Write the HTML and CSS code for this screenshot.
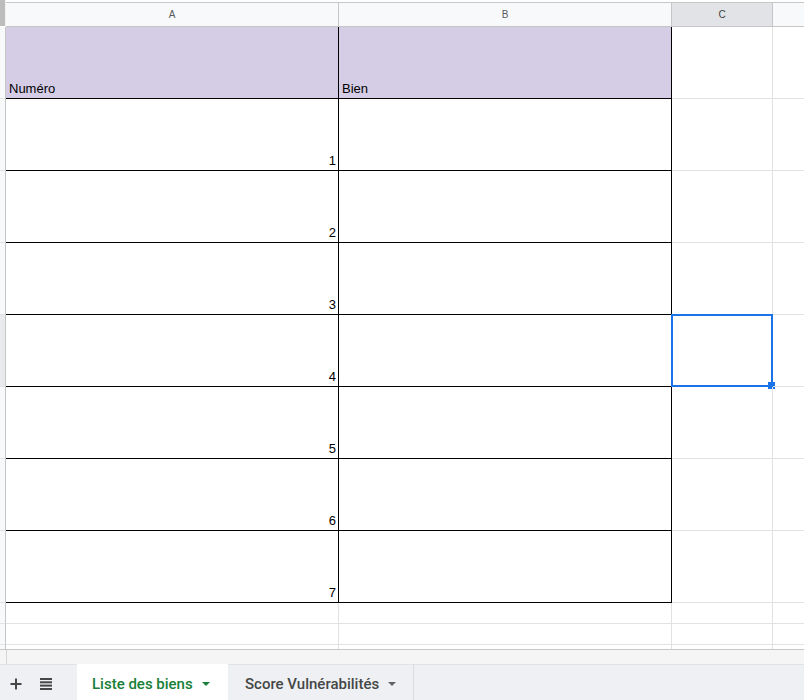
FILE: index.html
```html
<!DOCTYPE html>
<html lang="fr">
<head>
<meta charset="utf-8">
<title>Liste des biens</title>
<link rel="stylesheet" href="styles.css">
</head>
<body>
<div class="app">
  <div class="sheet">
    <div class="corner"></div>
    <div class="colhead">A</div>
    <div class="colhead">B</div>
    <div class="colhead colhead-sel">C</div>
    <div class="colhead colhead-last"></div>

    <div class="rowhead r-big"></div>
    <div class="cell tbl head-cell">Numéro</div>
    <div class="cell tbl head-cell">Bien</div>
    <div class="cell"></div>
    <div class="cell last"></div>

    <div class="rowhead r-big"></div>
    <div class="cell tbl num">1</div>
    <div class="cell tbl"></div>
    <div class="cell"></div>
    <div class="cell last"></div>

    <div class="rowhead r-big"></div>
    <div class="cell tbl num">2</div>
    <div class="cell tbl"></div>
    <div class="cell"></div>
    <div class="cell last"></div>

    <div class="rowhead r-big"></div>
    <div class="cell tbl num">3</div>
    <div class="cell tbl"></div>
    <div class="cell"></div>
    <div class="cell last"></div>

    <div class="rowhead r-big rowhead-sel"></div>
    <div class="cell tbl num">4</div>
    <div class="cell tbl"></div>
    <div class="cell selected"><span class="sel-box"></span><span class="sel-handle"></span></div>
    <div class="cell last"></div>

    <div class="rowhead r-big"></div>
    <div class="cell tbl num">5</div>
    <div class="cell tbl"></div>
    <div class="cell"></div>
    <div class="cell last"></div>

    <div class="rowhead r-big"></div>
    <div class="cell tbl num">6</div>
    <div class="cell tbl"></div>
    <div class="cell"></div>
    <div class="cell last"></div>

    <div class="rowhead r-big"></div>
    <div class="cell tbl num">7</div>
    <div class="cell tbl"></div>
    <div class="cell"></div>
    <div class="cell last"></div>

    <div class="rowhead"></div>
    <div class="cell"></div>
    <div class="cell"></div>
    <div class="cell"></div>
    <div class="cell last"></div>

    <div class="rowhead"></div>
    <div class="cell"></div>
    <div class="cell"></div>
    <div class="cell"></div>
    <div class="cell last"></div>

    <div class="rowhead"></div>
    <div class="cell"></div>
    <div class="cell"></div>
    <div class="cell"></div>
    <div class="cell last"></div>
  </div>
  <div class="hscroll"><div class="hscroll-edge"></div></div>
  <div class="tabbar">
    <div class="tool tool-add" title="Ajouter une feuille">
      <svg width="12" height="12" viewBox="0 0 12 12"><path d="M6 0.5v11M0.5 6h11" stroke="#444746" stroke-width="2" fill="none"/></svg>
    </div>
    <div class="tool tool-list" title="Toutes les feuilles">
      <svg width="12" height="12" viewBox="0 0 12 12"><rect x="0" y="0" width="12" height="2" fill="#444746"/><rect x="0" y="3.3" width="12" height="2" fill="#444746"/><rect x="0" y="6.6" width="12" height="2" fill="#444746"/><rect x="0" y="10" width="12" height="2" fill="#444746"/></svg>
    </div>
    <div class="tab tab-active">
      <span class="tab-label">Liste des biens</span>
      <span class="caret caret-green"></span>
    </div>
    <div class="tab">
      <span class="tab-label">Score Vulnérabilités</span>
      <span class="caret"></span>
    </div>
  </div>
</div>
</body>
</html>
```

FILE: styles.css
```css
* { box-sizing: border-box; }

html, body {
  margin: 0;
  padding: 0;
  background: #ffffff;
}

.app {
  width: 804px;
  height: 700px;
  display: flex;
  flex-direction: column;
  overflow: hidden;
  font-family: "Liberation Sans", Arial, sans-serif;
}

.sheet {
  height: 649px;
  overflow: hidden;
  display: grid;
  grid-template-columns: 6px 333px 333px 101px 1fr;
  grid-auto-rows: 21px;
  grid-template-rows: 27px repeat(8, 72px);
  flex: none;
}

.corner {
  height: 26px;
  background: #bdbdbd;
  border-right: 1px solid #f1f1f1;
}

.colhead {
  margin-top: 2px;
  height: 25px;
  background: #f8f9fa;
  border-top: 1px solid #c7c7c7;
  border-bottom: 1px solid #c4c7c5;
  border-right: 1px solid #c4c7c5;
  font-size: 10px;
  color: #575a5e;
  display: flex;
  align-items: center;
  justify-content: center;
  padding-bottom: 1px;
}

.colhead-sel {
  background: #e1e3e6;
  color: #3c4043;
}

.colhead-last {
  border-right: none;
}

.rowhead {
  background: #f8f9fa;
  border-right: 1px solid #c4c7c5;
  border-bottom: 1px solid #e2e2e2;
}

.rowhead-sel {
  background: #e8eaed;
}

.cell {
  position: relative;
  border-right: 1px solid #e2e2e2;
  border-bottom: 1px solid #e2e2e2;
  font-size: 13px;
  color: #000;
  line-height: 17px;
  display: flex;
  align-items: flex-end;
  padding: 0 3px 1px 3px;
}

.cell.last {
  border-right: none;
}

.cell.tbl {
  border-right-color: #000;
  border-bottom-color: #000;
}

.head-cell {
  background: #d5cde6;
}

.num {
  justify-content: flex-end;
  padding-right: 2px;
}

.sel-box {
  position: absolute;
  left: -1px;
  top: -1px;
  right: -1px;
  bottom: -1px;
  border: 2px solid #1a73e8;
}

.sel-handle {
  position: absolute;
  right: -3px;
  bottom: -3px;
  width: 7px;
  height: 7px;
  background: #1a73e8;
}

.hscroll {
  flex: none;
  height: 16px;
  background: #f5f5f5;
  border-top: 1px solid #c7c7c7;
  border-bottom: 1px solid #e1e3e6;
  display: flex;
}

.hscroll-edge {
  width: 7px;
  border-right: 1px solid #d6d6d6;
}

.tabbar {
  flex: 1;
  background: #eff0f3;
  display: flex;
  align-items: stretch;
}

.tool {
  display: flex;
  align-items: center;
  justify-content: center;
  padding-top: 3px;
}

.tool-add {
  width: 32px;
}

.tool-list {
  width: 28px;
  margin-right: 17px;
}

.tab {
  display: flex;
  align-items: center;
  padding: 3px 17px 0 17px;
  border-right: 1px solid #dadce0;
  font-family: Roboto, "Liberation Sans", Arial, sans-serif;
  font-size: 15px;
  font-weight: 500;
  color: #444746;
  margin-top: -1px;
}

.tab-active {
  background: #ffffff;
  color: #188038;
  width: 151px;
  padding-left: 15px;
  border-right: none;
}

.tab-label {
  white-space: nowrap;
}

.caret {
  margin-left: 9px;
  width: 0;
  height: 0;
  border-left: 4px solid transparent;
  border-right: 4px solid transparent;
  border-top: 4px solid #5f6368;
  margin-top: 1px;
}

.caret-green {
  border-top-color: #188038;
}
```
